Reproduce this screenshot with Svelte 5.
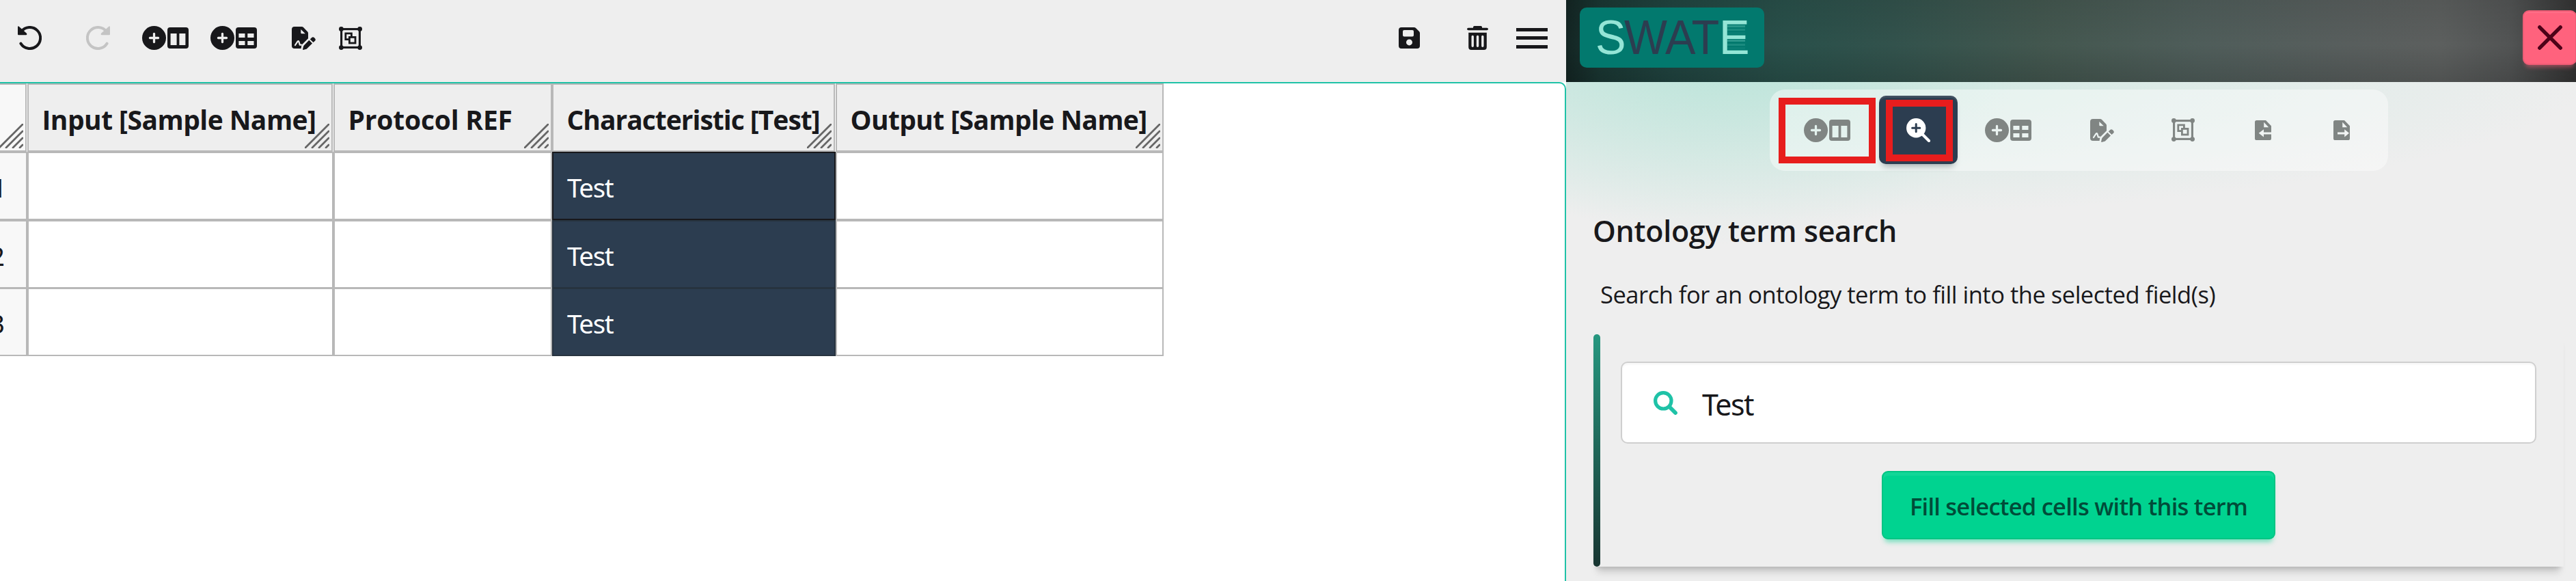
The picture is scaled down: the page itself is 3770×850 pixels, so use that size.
<script>
  const columns = [
    { title: 'Input [Sample Name]', width: 448, spacing: -0.55, gap: true },
    { title: 'Protocol REF', width: 320, spacing: -0.2, gap: false },
    { title: 'Characteristic [Test]', width: 415, spacing: -1, gap: true },
    { title: 'Output [Sample Name]', width: 480, spacing: -0.62, gap: false },
  ];
  const rows = [
    { n: 1, cells: ['', '', 'Test', ''] },
    { n: 2, cells: ['', '', 'Test', ''] },
    { n: 3, cells: ['', '', 'Test', ''] },
  ];
  const selectedColumn = 2;
</script>

{#snippet undo()}
  <svg width="35" height="35" viewBox="0 0 35 35">
    <path d="M5.2 8.2A15.5 15.5 0 1 1 4.4 25.6" fill="none" stroke="currentColor" stroke-width="4" stroke-linecap="round" />
    <path d="M0 1.4Q.4-.4 2 .9L13 10.8Q14 13.2 12 13.3H1.2Q0 13.3 0 12Z" fill="currentColor" />
  </svg>
{/snippet}

{#snippet plus()}
  <svg width="35" height="35" viewBox="0 0 512 512">
    <path fill="currentColor" d="M256 512A256 256 0 1 0 256 0a256 256 0 1 0 0 512zM232 344V280H168c-13.3 0-24-10.7-24-24s10.7-24 24-24h64V168c0-13.3 10.7-24 24-24s24 10.7 24 24v64h64c13.3 0 24 10.7 24 24s-10.7 24-24 24H280v64c0 13.3-10.7 24-24 24s-24-10.7-24-24z" />
  </svg>
{/snippet}

{#snippet addColumn()}
  {@render plus()}
  <svg width="31" height="31" viewBox="0 0 31 31">
    <path fill="currentColor" fill-rule="evenodd" d="M4 0H27Q31 0 31 4V27Q31 31 27 31H4Q0 31 0 27V4Q0 0 4 0ZM4.6 9V26H13.6V9ZM17.4 9V26H26.4V9Z" />
  </svg>
{/snippet}

{#snippet addTable()}
  {@render plus()}
  <svg width="31" height="31" viewBox="0 0 31 31">
    <path fill="currentColor" fill-rule="evenodd" d="M4 0H27Q31 0 31 4V27Q31 31 27 31H4Q0 31 0 27V4Q0 0 4 0ZM4.4 9V15H13.5V9ZM17.3 9V15H26.5V9ZM4.4 20V26H13.5V20ZM17.3 20V26H26.5V20Z" />
  </svg>
{/snippet}

{#snippet signature()}
  <svg width="35" height="35" viewBox="0 0 35 35">
    <path fill="currentColor" fill-rule="evenodd" d="M4 1H14.5Q16 1 17 2L23 8.2Q24 9.2 24 10.6V18.3L15.2 27Q14.5 27.8 14.2 29L13.6 33H4Q0 33 0 29V5Q0 1 4 1ZM13.3 5V10Q13.3 11.3 14.6 11.3H19.8Z" />
    <path class="cut" d="M5 28L8.6 22.6Q9.8 21.2 10.4 23L11.8 27.6H14" fill="none" stroke-width="2.2" stroke-linecap="round" stroke-linejoin="round" />
    <path fill="currentColor" d="M25.3 20.8L30 25.5L22.4 33Q21.6 33.8 20.4 34.1L16.9 35Q16 35 16.1 34.1L16.9 30.4Q17.2 29.2 18 28.3ZM26.8 19.4L29.2 17Q31 15.4 32.8 17L34 18.2Q35.6 20 34 21.8L31.5 24.1Z" />
  </svg>
{/snippet}

{#snippet group()}
  <svg width="34" height="34" viewBox="0 0 34 34">
    <rect x="3.6" y="3.6" width="26.8" height="26.8" fill="none" stroke="currentColor" stroke-width="3.1" />
    <g fill="currentColor">
      <circle cx="3.4" cy="3.4" r="3.4" /><circle cx="30.6" cy="3.4" r="3.4" />
      <circle cx="3.4" cy="30.6" r="3.4" /><circle cx="30.6" cy="30.6" r="3.4" />
    </g>
    <path d="M14.5 18.6H9.8V9.8H18.4V14.5" fill="none" stroke="currentColor" stroke-width="2.8" />
    <rect x="15.4" y="15.4" width="8.6" height="8.6" fill="none" stroke="currentColor" stroke-width="2.8" />
  </svg>
{/snippet}

{#snippet zoomIn()}
  <svg width="35" height="35" viewBox="0 0 35 35">
    <path d="M23 23L33 33" stroke="currentColor" stroke-width="4.2" stroke-linecap="round" />
    <path fill="currentColor" fill-rule="evenodd" d="M14.2 0A14.2 14.2 0 1 1 14.2 28.4A14.2 14.2 0 1 1 14.2 0ZM12.7 8.6V12.7H8.6A1.5 1.5 0 0 0 8.6 15.7H12.7V19.8A1.5 1.5 0 0 0 15.7 19.8V15.7H19.8A1.5 1.5 0 0 0 19.8 12.7H15.7V8.6A1.5 1.5 0 0 0 12.7 8.6Z" />
  </svg>
{/snippet}

{#snippet fileImport()}
  <svg width="24" height="29" viewBox="0 0 24 29">
    <path fill="currentColor" fill-rule="evenodd" d="M2.6 0H16L24 8.3V17.4H13V13.2L5.7 18.8L13 24.4V20.4H24V26.4Q24 29 21.4 29H2.6Q0 29 0 26.4V2.6Q0 0 2.6 0ZM13.2 2.8V10.2H20.2Z" />
  </svg>
{/snippet}

{#snippet fileExport()}
  <svg width="24" height="29" viewBox="0 0 24 29">
    <path fill="currentColor" fill-rule="evenodd" d="M2.6 0H16L24 8.3V26.4Q24 29 21.4 29H2.6Q0 29 0 26.4V2.6Q0 0 2.6 0ZM13.2 2.8V10.2H20.2ZM6 17.4V20.4H16.2V24.4L23 18.8L16.2 13.2V17.4Z" />
  </svg>
{/snippet}

{#snippet grip()}
  <svg class="grip" width="36" height="36" viewBox="0 0 36 36">
    <path d="M1 35L35 1M11 35L35 11M21 35L35 21M31 35L35 31" stroke="#666" stroke-width="2.8" stroke-linecap="round" />
  </svg>
{/snippet}

<div class="app">
  <main class="editor">
    <header class="toolbar">
      <div class="tools">
        <button style="width: 87px">{@render undo()}</button>
        <button class="disabled" style="width: 113px">{@render undo()}</button>
        <button style="width: 84px">{@render addColumn()}</button>
        <button style="width: 116px">{@render addTable()}</button>
        <button style="width: 89px">{@render signature()}</button>
        <button style="width: 48px">{@render group()}</button>
      </div>
      <div class="tools right">
        <button>
          <svg width="31" height="31" viewBox="0 0 31 31">
            <path fill="currentColor" fill-rule="evenodd" d="M4 0H22.4Q24 0 25 1L30 6Q31 7 31 8.6V27Q31 31 27 31H4Q0 31 0 27V4Q0 0 4 0ZM8 4Q6 4 6 6V11.4Q6 13.4 8 13.4H20Q22 13.4 22 11.4V6Q22 4 20 4ZM15.5 17.4A4.5 4.5 0 1 0 15.5 26.4A4.5 4.5 0 1 0 15.5 17.4Z" />
          </svg>
        </button>
        <button class="trash">
          <svg width="31" height="35" viewBox="0 0 31 35">
            <path fill="currentColor" fill-rule="evenodd" d="M2 2.7H9V1.5Q9.3 0 10.6 0H20.4Q21.7 0 22 1.5V2.7H29Q31 2.7 31 4.5T29 6.3H2Q0 6.3 0 4.5T2 2.7ZM2.2 9.8H28.8V31Q28.8 35 24.8 35H6.2Q2.2 35 2.2 31ZM8.2 13.8Q6.5 13.8 6.5 15.5V29.3Q6.5 31 8.2 31T9.9 29.3V15.5Q9.9 13.8 8.2 13.8ZM15.5 13.8Q13.8 13.8 13.8 15.5V29.3Q13.8 31 15.5 31T17.2 29.3V15.5Q17.2 13.8 15.5 13.8ZM22.8 13.8Q21.1 13.8 21.1 15.5V29.3Q21.1 31 22.8 31T24.5 29.3V15.5Q24.5 13.8 22.8 13.8Z" />
          </svg>
        </button>
        <button class="burger" aria-label="Menu"><i></i><i></i><i></i></button>
      </div>
    </header>

    <section class="sheet">
      <div class="row head">
        <div class="th index gap"><div class="th-in">{@render grip()}</div></div>
        {#each columns as c}
          <div class="th" class:gap={c.gap} style="width: {c.width}px">
            <div class="th-in">
              <span style="letter-spacing: {c.spacing}px">{c.title}</span>
              {@render grip()}
            </div>
          </div>
        {/each}
      </div>
      {#each rows as r}
        <div class="row">
          <div class="td index" class:first={r.n === 1}><span>{r.n}</span></div>
          {#each r.cells as cell, i}
            <div class="td" class:selected={i === selectedColumn} class:origin={i === selectedColumn && r.n === 1} style="width: {columns[i].width}px">
              {#if cell}<span>{cell}</span>{/if}
            </div>
          {/each}
        </div>
      {/each}
    </section>
  </main>

  <aside class="panel">
    <header class="brand">
      <svg class="logo" width="270" height="88" viewBox="0 0 270 88">
        <g transform="scale(.96 1)" font-family="Liberation Sans, sans-serif" font-size="69.5">
          <text y="68" x="24 67.7 130.2 170.4 212.5"><tspan fill="#94e5d6">S</tspan><tspan fill="#2c3d50">WAT</tspan><tspan fill="#94e5d6">E</tspan></text>
        </g>
        <g fill="#94e5d6">
          <rect x="216" y="26" width="26" height="3" opacity=".28" />
          <rect x="216" y="31" width="26" height="3" opacity=".17" />
          <rect x="216" y="36" width="26" height="3" opacity=".06" />
          <rect x="216" y="47" width="26" height="3" opacity=".28" />
          <rect x="216" y="53" width="26" height="3" opacity=".17" />
          <rect x="216" y="58" width="26" height="3" opacity=".06" />
        </g>
      </svg>
      <button class="close" aria-label="Close">
        <svg width="36" height="36" viewBox="0 0 36 36"><path d="M2.8 2.8L33.2 33.2M33.2 2.8L2.8 33.2" stroke="#4d0218" stroke-width="5.4" stroke-linecap="round" /></svg>
      </button>
    </header>

    <div class="content">
      <nav class="tabs">
        <button style="width: 148px" class="marked">{@render addColumn()}</button>
        <button style="width: 115px" class="active">{@render zoomIn()}</button>
        <button style="width: 148px">{@render addTable()}</button>
        <button style="width: 126px">{@render signature()}</button>
        <button style="width: 112px">{@render group()}</button>
        <button style="width: 121px">{@render fileImport()}</button>
        <button style="width: 110px">{@render fileExport()}</button>
      </nav>

      <h1>Ontology term search</h1>
      <p>Search for an ontology term to fill into the selected field(s)</p>

      <section class="card">
        <div class="field">
          <svg width="35" height="35" viewBox="0 0 35 35">
            <circle cx="14.3" cy="14.3" r="11.7" fill="none" stroke="#1fc2a7" stroke-width="5.2" />
            <path d="M23.5 23.5L32 32" stroke="#1fc2a7" stroke-width="5.8" stroke-linecap="round" />
          </svg>
          <span>Test</span>
        </div>
        <button class="fill">Fill selected cells with this term</button>
      </section>
    </div>
  </aside>
</div>

<style>
  :global(body) { background: #fff; }
  .app {
    display: flex;
    width: 3770px;
    height: 850px;
    overflow: hidden;
    color: #18181b;
    font-family: "Open Sans", "Noto Sans", sans-serif;
  }
  button {
    display: flex;
    align-items: center;
    justify-content: center;
    gap: 2px;
    box-sizing: border-box;
    padding: 0;
    border: 0;
    background: none;
    color: inherit;
    font: inherit;
  }
  svg { display: block; flex: none; }
  .cut { stroke: #eee; }

  .editor { display: flex; flex-direction: column; width: 2292px; flex: none; }
  .toolbar {
    display: flex;
    justify-content: space-between;
    align-items: center;
    box-sizing: border-box;
    height: 120px;
    padding-bottom: 9px;
    background: #eee;
  }
  .tools { display: flex; align-items: center; }
  .tools.right { padding-right: 27px; }
  .disabled { color: #c4c4c4; }
  .disabled :global(svg) { transform: scaleX(-1); }
  .trash { margin: 0 41px 0 69px; }
  .burger { flex-direction: column; gap: 7.5px; width: 46px; }
  .burger i { width: 100%; height: 5px; background: #18181b; }

  .sheet {
    flex: 1;
    box-sizing: border-box;
    overflow: hidden;
    border-top: 2px solid #1fc2a7;
    border-right: 2px solid #1fc2a7;
    border-top-right-radius: 10px;
    background: #fff;
  }
  .row { display: flex; height: 100px; }
  .row:last-child { margin-top: -1px; }
  .th, .td { box-sizing: border-box; flex: none; }
  .th.gap { padding-right: 1px; }
  .th-in {
    position: relative;
    display: flex;
    align-items: center;
    box-sizing: border-box;
    height: 100px;
    padding: 5px 0 0 19.5px;
    border: 2px solid #b8b8b8;
    background: #eee;
    font-size: 39px;
    font-weight: 700;
    line-height: 50px;
    white-space: nowrap;
  }
  .index { width: 40px; }
  .th.index .th-in { border-left: 0; background: #f8f8f8; }
  .grip { position: absolute; right: 3px; bottom: 3px; }
  .td {
    display: flex;
    align-items: center;
    padding: 4px 0 0 20px;
    border: 2px solid #b8b8b8;
    background: #fff;
    font-family: "Noto Sans", sans-serif;
    font-size: 38.5px;
    line-height: 50px;
    letter-spacing: -1.4px;
  }
  .td.index { padding-left: 0; border-left: 0; background: #f8f8f8; }
  .td.index span { margin-left: -15px; }
  .td.index.first span { margin-left: -12px; }
  .selected { border-color: #27333f; background: #2c3d50; color: #fff; }
  .origin { border-color: #18181b; }

  .panel { flex: 1; background: #eee; }
  .brand {
    display: flex;
    justify-content: space-between;
    align-items: flex-start;
    box-sizing: border-box;
    height: 120px;
    padding: 11px 0 0 20px;
    background:
      linear-gradient(rgba(0, 0, 0, .08), transparent 55%, rgba(0, 0, 0, .14)),
      linear-gradient(90deg, #132523 0, #1a3733 50px, #204440 150px, #29504a 320px, #32524c 480px, #43574f 700px, #4f5d5a 930px, #585e5d 1150px, #5c5f5e 1280px, #525454 1380px, #333 1478px);
  }
  .logo { border-radius: 10px; background: #02796e; }
  .close {
    width: 79px;
    height: 80px;
    margin: 4px -1px 0 0;
    border: 2px solid #ee5c75;
    border-radius: 9px;
    background: #ff627d;
    box-shadow: 0 7px 6px -4px rgba(255, 98, 125, .5), inset 0 2px 1px rgba(255, 255, 255, .08);
  }

  .content {
    box-sizing: border-box;
    height: 730px;
    padding: 11px 18px 0 40px;
    background:
      radial-gradient(ellipse 420px 270px at 240px -30px, rgba(170, 224, 210, .42), transparent),
      radial-gradient(ellipse 1250px 220px at 260px -20px, rgba(170, 226, 211, .52), transparent);
  }
  .tabs {
    display: flex;
    align-items: center;
    box-sizing: border-box;
    width: 905px;
    height: 119px;
    margin-left: 258px;
    padding: 0 0 1px 12px;
    border-radius: 22px;
    background: rgba(255, 255, 255, .42);
    color: #808583;
  }
  .tabs button { position: relative; flex: none; height: 100px; }
  .tabs .cut { stroke: #eef5f3; }
  .tabs .marked { padding-right: 4px; }
  .tabs .active {
    border-radius: 10px;
    background: #2c3d50;
    color: #fff;
    box-shadow: 0 8px 10px -5px rgba(30, 40, 50, .35), inset 0 3px 1px rgba(255, 255, 255, .1);
  }
  .marked::after, .active::after {
    content: "";
    position: absolute;
    box-sizing: border-box;
    border: 10px solid #e71d1d;
  }
  .marked::after { left: 0.5px; top: 3px; width: 142.5px; height: 96px; }
  .active::after { left: 10px; top: 6px; width: 98px; height: 90px; }

  h1 {
    margin: 58px 0 0 -1px;
    font-size: 43px;
    font-weight: 600;
    line-height: 60px;
    letter-spacing: -.3px;
  }
  p {
    margin: 38px 0 0 10px;
    font-size: 34.5px;
    line-height: 50px;
    letter-spacing: -.48px;
    white-space: nowrap;
  }
  .card {
    position: relative;
    display: flex;
    flex-direction: column;
    align-items: center;
    box-sizing: border-box;
    width: 1420px;
    height: 340px;
    margin-top: 33px;
    padding: 40px 40px 0;
    background: #eee;
    box-shadow: 0 14px 10px -6px rgba(0, 0, 0, .15), 0 6px 6px -4px rgba(0, 0, 0, .12);
  }
  .card::before {
    content: "";
    position: absolute;
    left: 0;
    top: 0;
    bottom: 0;
    width: 10px;
    border-radius: 5px;
    background: linear-gradient(#26977f, #183531);
  }
  .field {
    display: flex;
    align-items: center;
    gap: 36px;
    align-self: stretch;
    box-sizing: border-box;
    height: 120px;
    padding-left: 46px;
    border: 2px solid #cfcfcf;
    border-radius: 10px;
    background: #fff;
    box-shadow: inset 0 3px 2px rgba(0, 0, 0, .03);
  }
  .field span {
    padding-top: 6px;
    font-family: "Noto Sans", sans-serif;
    font-size: 43px;
    line-height: 60px;
    letter-spacing: -1.6px;
  }
  .fill {
    width: 576px;
    height: 100px;
    margin-top: 40px;
    padding-top: 3px;
    border: 2px solid #00c583;
    border-radius: 9px;
    background: #00d390;
    box-shadow: 0 8px 7px -4px rgba(0, 211, 144, .5), inset 0 5px 1px rgba(255, 255, 255, .07);
    color: #004c39;
    font-size: 34.5px;
    font-weight: 600;
    letter-spacing: -.76px;
    white-space: nowrap;
  }
</style>
